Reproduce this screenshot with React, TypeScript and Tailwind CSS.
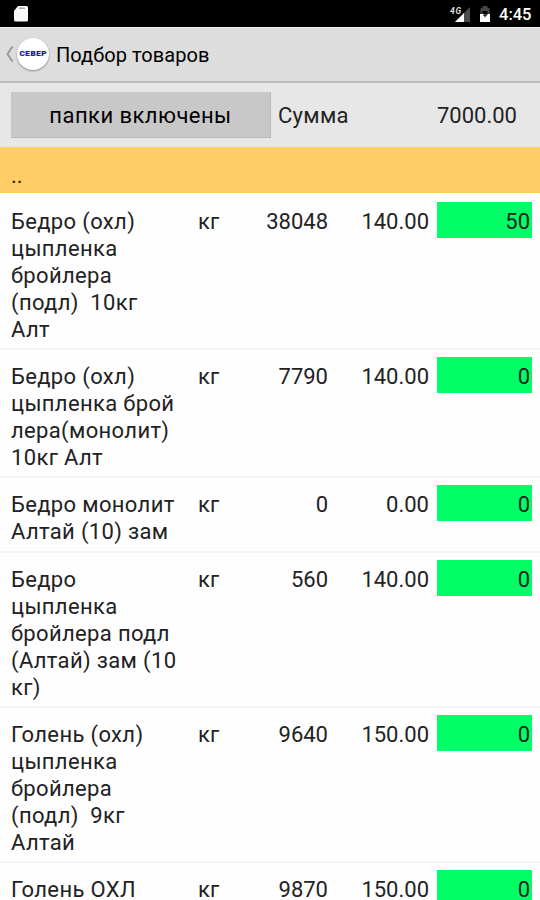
type Item = { name: string[]; stock: string; price: string; qty: string; height: string };

const items: Item[] = [
  { name: ['Бедро (охл)', 'цыпленка', 'бройлера', '(подл)  10кг', 'Алт'], stock: '38048', price: '140.00', qty: '50', height: 'h-[155px] border-transparent' },
  { name: ['Бедро (охл)', 'цыпленка брой', 'лера(монолит)', '10кг Алт'], stock: '7790', price: '140.00', qty: '0', height: 'h-[128px] border-[#f4f4f4]' },
  { name: ['Бедро монолит', 'Алтай (10) зам'], stock: '0', price: '0.00', qty: '0', height: 'h-[75px] border-[#f4f4f4]' },
  { name: ['Бедро', 'цыпленка', 'бройлера подл', '(Алтай) зам (10', 'кг)'], stock: '560', price: '140.00', qty: '0', height: 'h-[155px] border-[#f4f4f4]' },
  { name: ['Голень (охл)', 'цыпленка', 'бройлера', '(подл)  9кг', 'Алтай'], stock: '9640', price: '150.00', qty: '0', height: 'h-[155px] border-[#f4f4f4]' },
  { name: ['Голень ОХЛ'], stock: '9870', price: '150.00', qty: '0', height: 'h-[155px] border-[#f4f4f4]' },
];

function StatusBar() {
  return (
    <div className="flex h-[27px] shrink-0 items-center bg-black pl-[13px] pr-[8px] text-white">
      <svg width="16" height="18" viewBox="0 0 16 18" className="mt-[1px]">
        <path d="M5 1h8.500a1.500 1.500 0 0 1 1.500 1.500v12.500a1.500 1.500 0 0 1-1.500 1.500h-11a1.500 1.500 0 0 1-1.500-1.500V6z" fill="#fafafa" />
        <path d="M6 3.200h6" stroke="#999" strokeWidth="1.200" />
      </svg>
      <svg width="22" height="18" viewBox="0 0 22 18" className="ml-auto">
        <path d="M21 2v15H6z" fill="#4b4b4b" />
        <path d="M15 8V17H6z" fill="#fff" />
        <text x="1" y="8.500" fontSize="8.500" fontWeight="700" fontStyle="italic" fill="#ddd" stroke="#000" strokeWidth="1" paintOrder="stroke" className="font-[Roboto]" textLength="11">4G</text>
      </svg>
      <svg width="12" height="18" viewBox="0 0 12 18" className="ml-[8px]">
        <path d="M1.500 9V3.200h2V1h5v2.200h2V9h-2V6h-5v3z" fill="#484848" />
        <path d="M1 9h10v8H1z" fill="#fff" />
        <path d="M5 9h4l-3.500 4V11H4z" fill="#333" />
      </svg>
      <span className="ml-[8px] mt-[2px] w-[33px] whitespace-nowrap text-[16.500px] font-medium leading-[20px]">4:45</span>
    </div>
  );
}

function Row({ item }: { item: Item }) {
  return (
    <div className={`flex shrink-0 items-start border-t-2 bg-[#fefefe] bg-clip-padding pl-[11px] pr-[8px] ${item.height}`}>
      <div className="w-[187px] pt-[13px] tracking-[0.350px]">
        {item.name.map((line) => (
          <div key={line} className="whitespace-pre">{line}</div>
        ))}
      </div>
      <div className="w-[40px] pt-[13px]">кг</div>
      <div className="w-[90px] pt-[13px] text-right">{item.stock}</div>
      <div className="w-[101px] pt-[13px] text-right">{item.price}</div>
      <div className="ml-auto mt-[7px] h-[36px] w-[95px] bg-[#00ff66] pr-[2px] pt-[6px] text-right">{item.qty}</div>
    </div>
  );
}

export default function App() {
  return (
    <div className="flex h-[900px] w-[540px] flex-col overflow-hidden bg-white font-[Roboto,'Noto_Sans',sans-serif] text-[22px] leading-[27px] text-[#222]">
      <StatusBar />
      <header className="flex h-[56px] shrink-0 items-center border-b-2 border-t border-b-[#b9b9b9] border-t-[#ececec] bg-[#dddddd] pl-[5px]">
        <svg width="9" height="18" viewBox="0 0 9 18" className="mb-[1px]">
          <path d="M7.500 1.500L2.500 9l5 7.500" fill="none" stroke="#999" strokeWidth="2" />
        </svg>
        <div className="mb-[1px] ml-[3px] flex h-[32px] w-[32px] items-center justify-center rounded-full bg-white shadow-[0_1px_2px_#888]">
          <svg width="28" height="10" viewBox="0 0 28 10">
            <text x="0.500" y="7" fontSize="8" fontWeight="900" fill="#1919a6" stroke="#1919a6" strokeWidth="0.200" textLength="27" className="font-[Roboto]">СЕВЕР</text>
          </svg>
        </div>
        <h1 className="ml-[7px] mt-[1px] whitespace-nowrap text-[20px] tracking-[0.050px] text-black">Подбор товаров</h1>
      </header>
      <div className="flex h-[64px] shrink-0 items-center bg-[#e7e7e7] pl-[11px] pr-[23px]">
        <button className="h-[46px] w-[260px] border-b border-r border-[#b9b9b9] bg-[#c8c8c8] pt-[1px] tracking-[0.450px] text-black">папки включены</button>
        <span className="ml-[7px] mt-[1px] tracking-[0.300px]">Сумма</span>
        <span className="ml-auto mt-[1px]">7000.00</span>
      </div>
      <div className="flex h-[46px] shrink-0 items-end bg-[#ffcc66] pb-[4px] pl-[11px]">..</div>
      {items.map((item, i) => <Row key={i} item={item} />)}
    </div>
  );
}
